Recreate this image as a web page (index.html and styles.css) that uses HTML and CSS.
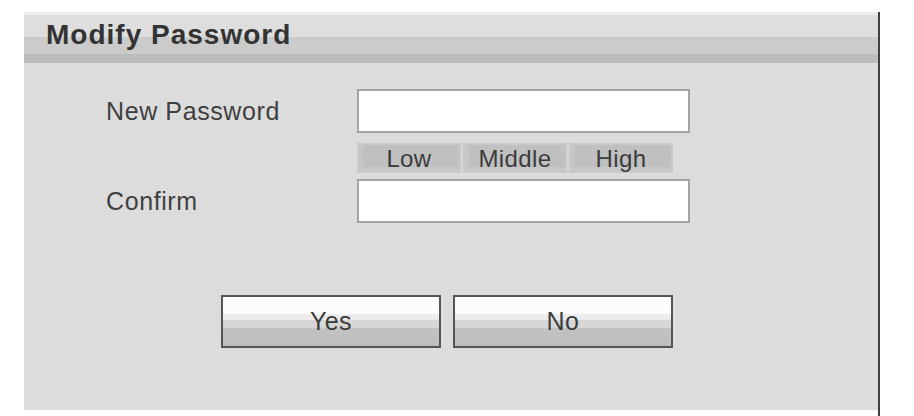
FILE: index.html
```html
<!DOCTYPE html>
<html lang="en">
<head>
    <meta charset="UTF-8">
    <meta name="viewport" content="width=device-width, initial-scale=1.0">
    <title>Modify Password</title>
    <link rel="stylesheet" href="styles.css">
</head>
<body>
    <div class="frame">
        <div class="panel">
            <div class="panel-head">Modify Password</div>

            <div class="form">
                <div class="row">
                    <label class="label" for="newPwd">New Password</label>
                    <input class="field" type="password" id="newPwd">
                </div>
                <div class="row strength-row">
                    <div class="strength">
                        <span>Low</span>
                        <span>Middle</span>
                        <span>High</span>
                    </div>
                </div>
                <div class="row confirm-row">
                    <label class="label" for="confirmPwd">Confirm</label>
                    <input class="field" type="password" id="confirmPwd">
                </div>

                <div class="buttons">
                    <button type="button">Yes</button>
                    <button type="button">No</button>
                </div>
            </div>
        </div>
    </div>
</body>
</html>
```

FILE: styles.css
```css
body {
    margin: 0;
    padding: 0;
    background: #ffffff;
    font-family: "Liberation Sans", Arial, sans-serif;
    color: #404040;
}
.frame {
    margin: 12px 0 0 24px;
    width: 854px;
    height: 404px;
    border-right: 2px solid #404040;
}
.panel {
    background: #dcdcdc;
    height: 398px;
}
.panel-head {
    height: 51px;
    line-height: 46px;
    padding-left: 22px;
    font-size: 28px;
    font-weight: bold;
    letter-spacing: 1px;
    color: #333333;
    background: linear-gradient(to bottom,
        #ececec 0px, #ececec 3px,
        #dedede 3px, #dedede 25px,
        #cbcbcb 25px, #cbcbcb 42px,
        #bcbcbc 42px, #bcbcbc 51px);
}
.form {
    padding: 26px 0 0 82px;
}
.row {
    display: flex;
    align-items: center;
}
.label {
    width: 251px;
    font-size: 25px;
    line-height: 44px;
    letter-spacing: 0.6px;
}
.field {
    box-sizing: border-box;
    width: 333px;
    height: 44px;
    margin: 0;
    border: 2px solid #a4a4a4;
    background: #ffffff;
    font-size: 20px;
    padding: 0 8px;
    outline: none;
}
.strength-row {
    margin-top: 10px;
    padding-left: 251px;
}
.strength {
    display: flex;
    gap: 2px;
    width: 316px;
    height: 30px;
    background: #d6d6d6;
}
.strength span {
    flex: 1;
    box-sizing: border-box;
    background: #c0c0c0;
    border: 2px solid #c9c9c9;
    box-shadow: inset 0 -4px 0 #c7c7c7, inset 4px 0 0 #c6c6c6;
    font-size: 24px;
    line-height: 28px;
    letter-spacing: 0.4px;
    text-align: center;
    color: #3c3c3c;
}
.confirm-row {
    margin-top: 6px;
}
.buttons {
    display: flex;
    gap: 12px;
    margin: 72px 0 0 115px;
}
.buttons button {
    box-sizing: border-box;
    width: 220px;
    height: 53px;
    border: 2px solid #555555;
    font-family: "Liberation Sans", Arial, sans-serif;
    font-size: 25px;
    letter-spacing: 0.4px;
    color: #3c3c3c;
    cursor: pointer;
    background: linear-gradient(to bottom,
        #ffffff 0%, #fbfbfb 34%,
        #ececec 36%, #ececec 46%,
        #d6d6d6 48%, #d6d6d6 62%,
        #c2c2c2 64%, #bdbdbd 100%);
}
```
